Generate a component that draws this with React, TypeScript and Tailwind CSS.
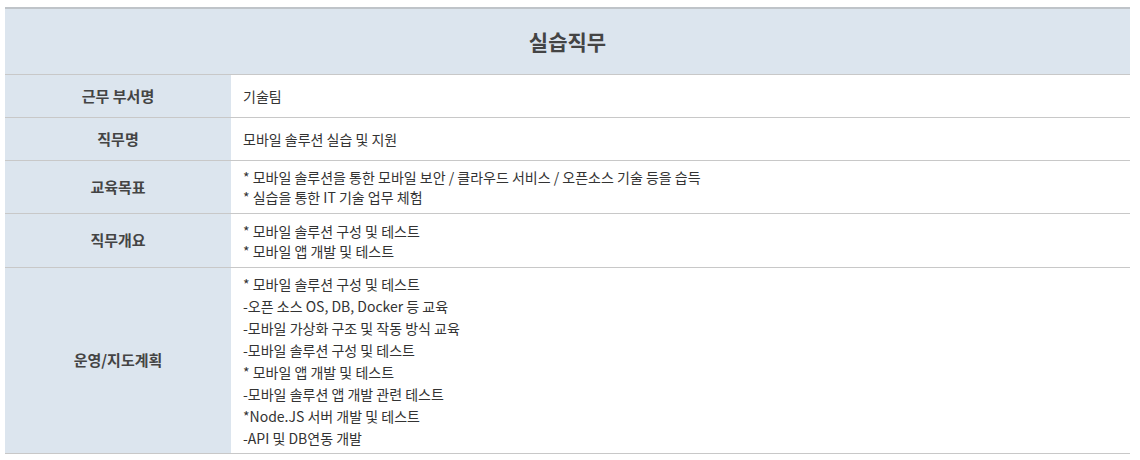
type Row = { label: string; lines: string[]; h: string };

const rows: Row[] = [
  { label: "근무 부서명", lines: ["기술팀"], h: "h-[43px]" },
  { label: "직무명", lines: ["모바일 솔루션 실습 및 지원"], h: "h-[43px]" },
  {
    label: "교육목표",
    lines: [
      "* 모바일 솔루션을 통한 모바일 보안 / 클라우드 서비스 / 오픈소스 기술 등을 습득",
      "* 실습을 통한 IT 기술 업무 체험",
    ],
    h: "h-[53px]",
  },
  {
    label: "직무개요",
    lines: ["* 모바일 솔루션 구성 및 테스트", "* 모바일 앱 개발 및 테스트"],
    h: "h-[54px]",
  },
  {
    label: "운영/지도계획",
    lines: [
      "* 모바일 솔루션 구성 및 테스트",
      "-오픈 소스 OS, DB, Docker 등 교육",
      "-모바일 가상화 구조 및 작동 방식 교육",
      "-모바일 솔루션 구성 및 테스트",
      "* 모바일 앱 개발 및 테스트",
      "-모바일 솔루션 앱 개발 관련 테스트",
      "*Node.JS 서버 개발 및 테스트",
      "-API 및 DB연동 개발",
    ],
    h: "h-[186px]",
  },
];

export default function App() {
  return (
    <div
      className="bg-white w-[1140px] h-[460px] pt-[7px] px-[5px] text-[#333]"
      style={{ fontFamily: '"Noto Sans CJK KR", "Noto Sans", sans-serif' }}
    >
      <div className="w-[1125px] border-t-2 border-[#bfc4c9]">
        {/* Title */}
        <div className="h-[66px] bg-[#dce5ee] border-b border-[#c8c8c8] flex items-center justify-center">
          <h2 className="text-[21px] font-bold text-[#444]">실습직무</h2>
        </div>

        {rows.map((r) => (
          <div
            key={r.label}
            className={`grid grid-cols-[226px_1fr] border-b border-[#c8c8c8] ${r.h}`}
          >
            <div className="bg-[#dce5ee] flex items-center justify-center text-[15px] font-bold text-[#444]">
              {r.label}
            </div>
            <div className="flex flex-col justify-center px-3 text-[14px] leading-[20px] text-[#333]">
              {r.lines.map((l, i) => (
                <p key={i} className={r.lines.length > 2 ? "leading-[22px]" : ""}>
                  {l}
                </p>
              ))}
            </div>
          </div>
        ))}
      </div>
    </div>
  );
}
